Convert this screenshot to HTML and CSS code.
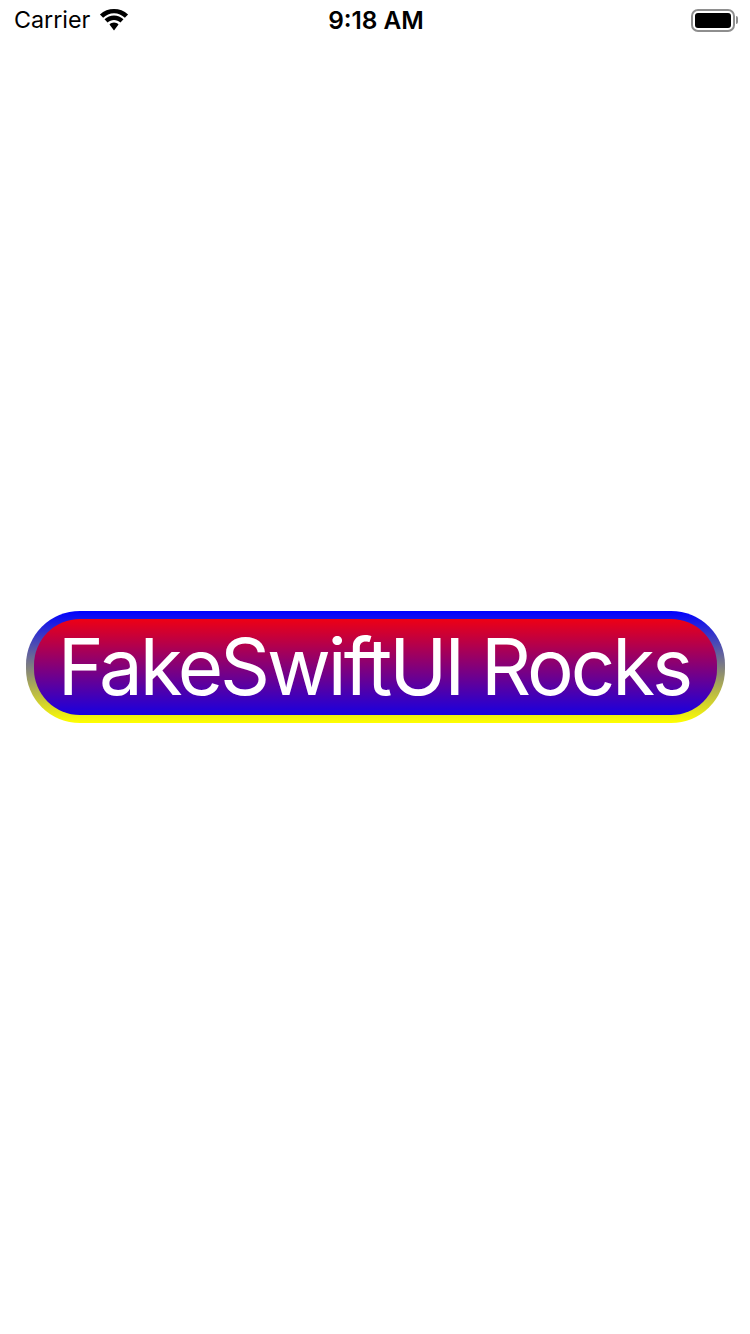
FILE: index.html
```html
<!DOCTYPE html>
<html lang="en">
<head>
<meta charset="utf-8">
<title>FakeSwiftUI Rocks</title>
<link rel="stylesheet" href="styles.css">
</head>
<body>
<div class="status-bar">
  <div class="status-left">
    <span class="carrier">Carrier</span>
    <svg class="wifi" width="30" height="22" viewBox="0 0 32 22" preserveAspectRatio="none">
      <path d="M16 4.200c4.400 0 8.500 1.700 11.600 4.600l3.400-3.400C26.800 1.800 21.600 0 16 0S5.200 1.800 1 5.400l3.400 3.400C7.500 5.900 11.600 4.200 16 4.200z"/>
      <path d="M16 10.900c2.600 0 5 .9 6.900 2.600l3.200-3.200c-2.800-2.400-6.300-3.800-10.100-3.800s-7.300 1.400-10.100 3.800l3.200 3.200c1.900-1.700 4.300-2.600 6.900-2.600z"/>
      <path d="M16 13.600c-1.800 0-3.500.7-4.800 1.900L16 21.500l4.800-6c-1.300-1.200-3-1.900-4.800-1.900z"/>
    </svg>
  </div>
  <span class="clock">9:18 AM</span>
  <div class="battery">
    <div class="battery-shell"><div class="battery-fill"></div></div>
    <div class="battery-cap"></div>
  </div>
</div>
<main class="stage">
  <div class="pill"><span class="pill-label">FakeSwiftUI Rocks</span></div>
</main>
</body>
</html>
```
FILE: styles.css
```css
html, body {
  margin: 0;
  padding: 0;
  height: 100%;
  background: #fff;
}
body {
  font-family: Inter, "Liberation Sans", sans-serif;
  color: #000;
}
.status-bar {
  position: absolute;
  top: 0;
  left: 0;
  right: 0;
  height: 40px;
  display: grid;
  grid-template-columns: 1fr auto 1fr;
  align-items: center;
  padding: 0 12px 0 14px;
  box-sizing: border-box;
}
.status-left {
  display: flex;
  align-items: center;
  gap: 9px;
}
.carrier {
  font-size: 23.300px;
  line-height: 40px;
}
.wifi {
  display: block;
  fill: #000;
}
.clock {
  font-size: 24.400px;
  font-weight: 600;
  line-height: 40px;
}
.battery {
  justify-self: end;
  display: flex;
  align-items: center;
  gap: 1px;
}
.battery-shell {
  width: 44px;
  height: 23px;
  box-sizing: border-box;
  border: 2px solid #8e8e8e;
  border-radius: 7px;
  padding: 2px;
}
.battery-fill {
  height: 100%;
  background: #000;
  border-radius: 3px;
}
.battery-cap {
  width: 2px;
  height: 8px;
  background: #8e8e8e;
  border-radius: 0 2px 2px 0;
}
.stage {
  height: 100%;
  display: flex;
  align-items: center;
  justify-content: center;
}
.pill {
  width: 699px;
  height: 112px;
  box-sizing: border-box;
  border: 8px solid transparent;
  border-radius: 54px;
  background:
    linear-gradient(#ee0014, #1800e0) padding-box,
    linear-gradient(#0000ff, #ffff00) border-box;
  display: flex;
  align-items: center;
  justify-content: center;
}
.pill-label {
  color: #fff;
  font-size: 78px;
  line-height: 96px;
  letter-spacing: -3.050px;
  padding-right: 2px;
  white-space: nowrap;
}
```
